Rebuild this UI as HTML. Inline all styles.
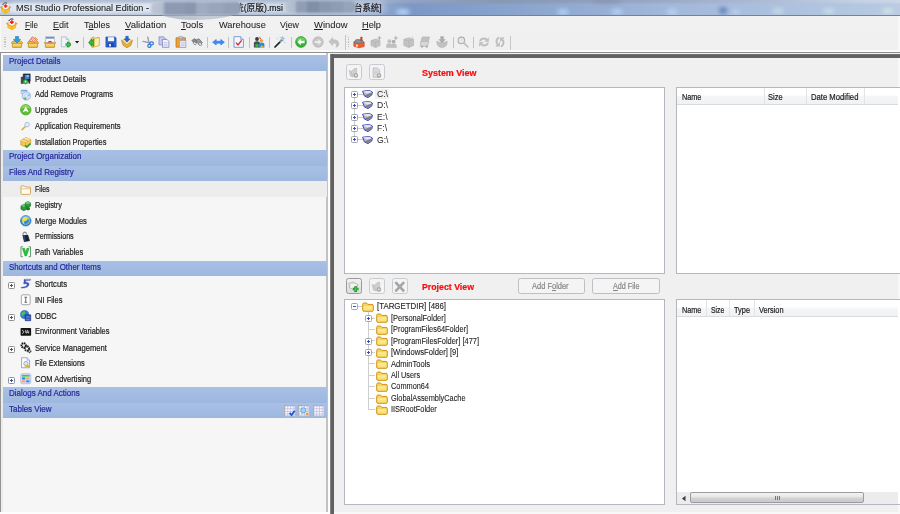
<!DOCTYPE html>
<html><head><meta charset="utf-8"><title>MSI Studio Professional Edition</title>
<style>
*{box-sizing:border-box}
html,body{margin:0;padding:0}
body{width:900px;height:514px;overflow:hidden;position:relative;background:#f0f0f0;
 font-family:"Liberation Sans","Noto Sans CJK SC",sans-serif;font-size:9.7px;color:#1a1a1a}
.a{position:absolute}
.t{position:absolute;white-space:nowrap;transform-origin:0 50%;line-height:12px;height:12px;-webkit-text-stroke:.22px currentColor}
svg{position:absolute;overflow:visible}
#title{left:0;top:0;width:900px;height:15px;
 background:linear-gradient(to right,#d6e1ef 0px,#d0dcec 140px,#c2d0e3 250px,#b4c5df 340px,#8aa3cc 390px,#7d98c5 412px,#87a2cb 500px,#97aed3 600px,#a3b8da 670px,#adc1de 780px,#b5c8e1 870px,#bccbe2 900px)}
#title .top{left:0;top:0;width:900px;height:5px;background:linear-gradient(to right,#a4b4cc 0,#a2b2cb 380px,#93a5c4 405px,#8797b0 500px,#8f9fb9 590px,#9aaac6 670px,#b0bed6 780px,#c8d4e6 870px,#ccd7e8 900px);-webkit-mask-image:linear-gradient(to bottom,#000 0,rgba(0,0,0,.85) 2px,rgba(0,0,0,0) 4.6px);mask-image:linear-gradient(to bottom,#000 0,rgba(0,0,0,.85) 2px,rgba(0,0,0,0) 4.6px)}
#title .bot{left:0;top:10.5px;width:400px;height:4.5px;background:linear-gradient(to bottom,rgba(110,130,165,0),rgba(110,130,165,.32));-webkit-mask-image:linear-gradient(to right,#000 330px,rgba(0,0,0,0) 395px);mask-image:linear-gradient(to right,#000 330px,rgba(0,0,0,0) 395px)}
.blob{position:absolute;filter:blur(2px);border-radius:50%}
#titleline{left:0;top:14.5px;width:900px;height:1.3px;background:#77828f}
#menubar{left:0;top:16px;width:900px;height:17px;background:#f1f1f1}
#toolbar{left:0;top:33px;width:900px;height:19px;background:#f0f0f0}
.mi{color:#1c1c1c;-webkit-text-stroke-width:.05px}
u{text-decoration-thickness:.8px;text-underline-offset:1px}
.sep{position:absolute;width:1px;background:#c2c2c2;top:37px;height:11px}
.hdr{position:absolute;left:3.2px;width:323.6px;height:16px;background:linear-gradient(to bottom,#a9c0e6,#9db7de)}
.hdrt{color:#26269c}
.lt{color:#222}
.box{position:absolute;background:#fff;border:1.2px solid #b4b8be}
.sb{position:absolute;width:16px;height:16px;border:1px solid #c6ccd2;border-radius:2.5px;background:#f4f4f4}
.sb.en{border-color:#9a9a9a;background:linear-gradient(to bottom,#f2f2f2,#dcdcdc)}
.btn{position:absolute;height:16.2px;border:1px solid #bcc0c4;border-radius:2.5px;background:#f4f4f4}
.red{color:#fb0c0c;font-weight:bold}
.tt{color:#1d1d1d;-webkit-text-stroke-width:.12px}
.lh{color:#1d1d1d}
.gr{color:#868686}
.pm{position:absolute;width:7px;height:7px;border:1px solid #a3a3a3;border-radius:1.5px;background:#fff}
.pm i{position:absolute;left:1px;top:2px;width:3px;height:1px;background:#3a4fb0}
.pm b{position:absolute;left:2px;top:1px;width:1px;height:3px;background:#3a4fb0}
.dl{position:absolute;background:#cdcdcd}
</style></head>
<body>
<div id="title" class="a" style="overflow:hidden"><div class="a top"></div><div class="a bot"></div><div class="blob" style="left:396.0px;top:8.5px;width:14px;height:6px;background:#b4d2f6"></div><div class="blob" style="left:557.0px;top:8.5px;width:12px;height:6px;background:#b2cff4"></div><div class="blob" style="left:611.0px;top:8.5px;width:12px;height:6px;background:#b2cff4"></div><div class="blob" style="left:666.0px;top:8.5px;width:12px;height:6px;background:#b8d2f4"></div><div class="blob" style="left:719.0px;top:6.5px;width:8px;height:7px;background:#6485bd"></div><div class="blob" style="left:732.0px;top:10.0px;width:8px;height:4px;background:#c0d6f2"></div><div class="blob" style="left:772.0px;top:8.0px;width:12px;height:6px;background:#c4dbe4"></div><div class="blob" style="left:823.0px;top:8.0px;width:12px;height:6px;background:#c8dde6"></div><div class="blob" style="left:882.0px;top:8.0px;width:12px;height:6px;background:#cfe0e6"></div><div class="blob" style="left:592.0px;top:0.0px;width:30px;height:3px;background:#7f8fa8"></div></div>
<div class="a" style="left:10px;top:1px;width:375px;height:13px;background:rgba(255,255,255,.30);filter:blur(3px);border-radius:6px"></div>
<svg style="left:0.4px;top:1.8px;filter:blur(.3px)" width="11.2" height="11.2" viewBox="0 0 12 12"><path d="M.4 5.600 L2.800 4.400 L6 7.600 L9.200 4.400 L11.600 5.600 L10 7.400 L10 10 L6 12 L2 10 L2 7.400Z" fill="#f6a414" stroke="#d9820c" stroke-width=".5"/><path d="M2 7.400 L6 9.400 L10 7.400 L10 10 L6 12 L2 10Z" fill="#fbc72a"/><path d="M6 9.400 V12" stroke="#e8940f" stroke-width=".5"/><circle cx="6" cy="4.300" r="3.400" fill="#fbf7f7" stroke="#d8cfd2" stroke-width=".4"/><path d="M2.900 3.200 A3.400 3.400 0 0 1 7.600 1.300" fill="none" stroke="#1c2338" stroke-width="1"/><path d="M6 2.300v4M4 4.300h4" stroke="#ee2222" stroke-width="1.700"/></svg>
<span class="t ti" style="left:15.5px;top:1.6px;font-size:9.7px;transform:scaleX(0.939);color:#1b1b1b;-webkit-text-stroke-width:.08px">MSI Studio Professional Edition -</span>
<span class="t ti" style="left:235.4px;top:1.8px;font-size:9.3px;transform:scaleX(0.937);color:#1b1b1b">统(原版).msi</span>
<div class="a" style="left:151px;top:1.5px;width:89.5px;height:13.5px;border-radius:5px;filter:blur(1.1px);background:linear-gradient(to right,#bcc6d4 0,#b4bfce 12px,#8d9ab2 14px,#8d9ab2 33px,#8996ae 35px,#8996ae 44px,#9eabc2 46px,#9eabc2 56px,#98a5bb 58px,#98a5bb 72px,#93a0b7 74px,#93a0b7 100%)"></div>
<span class="t ti" style="left:354.4px;top:1.8px;font-size:9.3px;transform:scaleX(0.905);color:#1b1b1b">台系统]</span>
<div class="a" style="left:285px;top:1.2px;width:71px;height:11.6px;border-radius:5px;filter:blur(1.1px);background:linear-gradient(to right,#b8c3d2 0,#b0bccc 10px,#909db3 12px,#909db3 21px,#828ea7 23px,#828ea7 33px,#8b97ae 35px,#8b97ae 45px,#909cb3 47px,#909cb3 57px,#97a3b8 59px,#97a3b8 100%)"></div>
<div id="titleline" class="a"></div>
<div id="menubar" class="a"></div>
<svg style="left:5.8px;top:18px;filter:blur(.3px)" width="11.6" height="11.6" viewBox="0 0 12 12"><path d="M.4 5.600 L2.800 4.400 L6 7.600 L9.200 4.400 L11.600 5.600 L10 7.400 L10 10 L6 12 L2 10 L2 7.400Z" fill="#f6a414" stroke="#d9820c" stroke-width=".5"/><path d="M2 7.400 L6 9.400 L10 7.400 L10 10 L6 12 L2 10Z" fill="#fbc72a"/><path d="M6 9.400 V12" stroke="#e8940f" stroke-width=".5"/><circle cx="6" cy="4.300" r="3.400" fill="#fbf7f7" stroke="#d8cfd2" stroke-width=".4"/><path d="M2.900 3.200 A3.400 3.400 0 0 1 7.600 1.300" fill="none" stroke="#1c2338" stroke-width="1"/><path d="M6 2.300v4M4 4.300h4" stroke="#ee2222" stroke-width="1.700"/></svg>
<div class="a" style="left:158px;top:11px;width:80px;height:9px;border-radius:0 0 55% 45%/0 0 100% 100%;background:linear-gradient(to right,#b4bdcb,#bcc4d0 40%,#c6ccd6 60%,#bfc6d2);filter:blur(.7px);clip-path:inset(4.4px -3px -3px -3px)"></div>
<span class="t mi" style="left:25.2px;top:18.8px;font-size:9.8px;transform:scaleX(0.823);"><u>F</u>ile</span>
<span class="t mi" style="left:53.3px;top:18.8px;font-size:9.8px;transform:scaleX(0.923);"><u>E</u>dit</span>
<span class="t mi" style="left:84px;top:18.8px;font-size:9.8px;transform:scaleX(0.917);">T<u>a</u>bles</span>
<span class="t mi" style="left:124.9px;top:18.8px;font-size:9.8px;transform:scaleX(0.976);"><u>V</u>alidation</span>
<span class="t mi" style="left:181.2px;top:18.8px;font-size:9.8px;transform:scaleX(0.970);"><u>T</u>ools</span>
<span class="t mi" style="left:218.6px;top:18.8px;font-size:9.8px;transform:scaleX(0.941);">Warehouse</span>
<span class="t mi" style="left:280.3px;top:18.8px;font-size:9.8px;transform:scaleX(0.901);">V<u>i</u>ew</span>
<span class="t mi" style="left:314px;top:18.8px;font-size:9.8px;transform:scaleX(0.961);"><u>W</u>indow</span>
<span class="t mi" style="left:362.3px;top:18.8px;font-size:9.8px;transform:scaleX(0.943);"><u>H</u>elp</span>
<div id="toolbar" class="a"></div>
<div class="a" style="left:0;top:50.4px;width:900px;height:1.4px;background:#fafafa"></div><div class="a" style="left:0;top:16px;width:1px;height:35.8px;background:#fafafa"></div>
<div class="a" style="left:4.4px;top:36.6px;width:1.2px;height:1.2px;background:#c4c4c4"></div>
<div class="a" style="left:4.4px;top:39.0px;width:1.2px;height:1.2px;background:#c4c4c4"></div>
<div class="a" style="left:4.4px;top:41.4px;width:1.2px;height:1.2px;background:#c4c4c4"></div>
<div class="a" style="left:4.4px;top:43.8px;width:1.2px;height:1.2px;background:#c4c4c4"></div>
<div class="a" style="left:4.4px;top:46.2px;width:1.2px;height:1.2px;background:#c4c4c4"></div>
<div class="a" style="left:347.6px;top:36.6px;width:1.2px;height:1.2px;background:#bcbcbc"></div>
<div class="a" style="left:347.6px;top:39.0px;width:1.2px;height:1.2px;background:#bcbcbc"></div>
<div class="a" style="left:347.6px;top:41.4px;width:1.2px;height:1.2px;background:#bcbcbc"></div>
<div class="a" style="left:347.6px;top:43.8px;width:1.2px;height:1.2px;background:#bcbcbc"></div>
<div class="a" style="left:347.6px;top:46.2px;width:1.2px;height:1.2px;background:#bcbcbc"></div>
<div class="a" style="left:344.6px;top:34.6px;width:1px;height:15.4px;background:#c4c4c4"></div>
<div class="a" style="left:510.2px;top:36px;width:1px;height:13.6px;background:#c6c6c6"></div>
<div class="sep" style="left:83px"></div>
<div class="sep" style="left:137px"></div>
<div class="sep" style="left:207px"></div>
<div class="sep" style="left:228px"></div>
<div class="sep" style="left:249px"></div>
<div class="sep" style="left:269px"></div>
<div class="sep" style="left:290.5px"></div>
<div class="sep" style="left:452.5px"></div>
<div class="sep" style="left:473px"></div>
<svg style="left:10.6px;top:36.2px;filter:blur(.3px)" width="12" height="12" viewBox="0 0 12 12"><path d="M.6 6.3 L2.2 5 H9.8 L11.4 6.3 V7.4 H10.6 V11 Q10.6 11.5 10.1 11.5 H1.9 Q1.4 11.5 1.4 11 V7.4 H.6Z" fill="#edc24a" stroke="#b8891f" stroke-width=".7"/><path d="M1.4 7.4 H10.6" stroke="#b8891f" stroke-width=".6"/><path d="M2 8.2 H10 V9.4 H2Z" fill="#f7dc7e"/><path d="M4.4 .5 H7.6 V3.4 H9.6 L6 7 L2.4 3.4 H4.4Z" fill="#2c9be0" stroke="#1a6fb4" stroke-width=".5"/></svg>
<svg style="left:27.2px;top:36.2px;filter:blur(.3px)" width="12" height="12" viewBox="0 0 12 12"><path d="M.6 6.3 L2.2 5 H9.8 L11.4 6.3 V7.4 H10.6 V11 Q10.6 11.5 10.1 11.5 H1.9 Q1.4 11.5 1.4 11 V7.4 H.6Z" fill="#edc24a" stroke="#b8891f" stroke-width=".7"/><path d="M1.4 7.4 H10.6" stroke="#b8891f" stroke-width=".6"/><path d="M2 8.2 H10 V9.4 H2Z" fill="#f7dc7e"/><path d="M2.2 5.2 L5.2 .8 L9.6 3.8 L8.2 6.4Z" fill="#f6ece4" stroke="#d0452a" stroke-width=".6"/><path d="M3.4 4.4 L5.8 1.6 M4.8 5.2 L7.2 2.4 M6.3 5.8 L8.6 3.3" stroke="#e0402a" stroke-width=".7"/><path d="M7.6 1.2 L10.6 4" stroke="#e8a91c" stroke-width="1.1"/></svg>
<svg style="left:43.5px;top:36.2px;filter:blur(.3px)" width="12" height="12" viewBox="0 0 12 12"><path d="M.6 6.3 L2.2 5 H9.8 L11.4 6.3 V7.4 H10.6 V11 Q10.6 11.5 10.1 11.5 H1.9 Q1.4 11.5 1.4 11 V7.4 H.6Z" fill="#edc24a" stroke="#b8891f" stroke-width=".7"/><path d="M1.4 7.4 H10.6" stroke="#b8891f" stroke-width=".6"/><path d="M2 8.2 H10 V9.4 H2Z" fill="#f7dc7e"/><path d="M1.6 .7 H10.4 V6.6 H1.6Z" fill="#fbfbfb" stroke="#9aa0aa" stroke-width=".6"/><path d="M2 1.1 H10 V2.6 H2Z" fill="#4e86d8"/><path d="M3 6.4 Q6 3.2 9 6.4Z" fill="#e23a2a"/></svg>
<svg style="left:60px;top:36.2px;filter:blur(.3px)" width="12" height="12" viewBox="0 0 12 12"><path d="M1.4 .9 H6.2 L8.8 3.5 V10.8 H1.4Z" fill="#eef2f9" stroke="#9fb0cc" stroke-width=".7"/><path d="M6.2 .9 V3.5 H8.8" fill="#d5dfee" stroke="#9fb0cc" stroke-width=".6"/><path d="M8.300 5.800v5.400M5.600 8.500h5.400" stroke="#1f8a28" stroke-width="2.500"/><path d="M8.300 6.400v4.200M6.200 8.500h4.200" stroke="#3cc848" stroke-width="1.300"/></svg>
<svg style="left:87.8px;top:36.2px;filter:blur(.3px)" width="12" height="12" viewBox="0 0 12 12"><path d="M3 2.4 L5.6 1 L6.8 2.2 L11.2 1.4 V9.6 L4 11.4 Z" fill="#efcf5a" stroke="#b99326" stroke-width=".7"/><path d="M6.6 3 L10.8 2.2 V9.2 L6.6 10.4Z" fill="#fbeeb0"/><path d="M.6 6.600 L3.600 3 V5 L5.800 3 V10.200 L3.600 8.200 V10.200Z" fill="#3cb53c" stroke="#1c7d22" stroke-width=".6"/></svg>
<svg style="left:104.6px;top:36.2px;filter:blur(.3px)" width="12" height="12" viewBox="0 0 12 12"><path d="M.9 1 H10.2 L11.1 1.9 V11.1 H.9Z" fill="#2862cf" stroke="#1c48a6" stroke-width=".6"/><path d="M2.9 1.2 H9.1 V5.2 H2.9Z" fill="#f2f5fb"/><path d="M3.3 7.4 H8.7 V11 H3.3Z" fill="#1b46ae"/><path d="M4.1 8 H5.9 V10.6 H4.1Z" fill="#e9eefa"/></svg>
<svg style="left:120.8px;top:36.2px;filter:blur(.3px)" width="12" height="12" viewBox="0 0 12 12"><path d="M.6 4.2 L6 9.2 L11.4 4.2 L9.8 9.4 L6 11.7 L2.2 9.4Z" fill="#f2b52a" stroke="#b97a12" stroke-width=".7"/><path d="M1.6 4 L6 1.8 L10.4 4 L6 8.6Z" fill="#fbe7a4" stroke="#c99a2c" stroke-width=".5"/><path d="M4.7 .3 H7.3 V3 H8.9 L6 6.2 L3.1 3 H4.7Z" fill="#2166e0" stroke="#1546a8" stroke-width=".4"/></svg>
<svg style="left:141.8px;top:36.2px;filter:blur(.3px)" width="12" height="12" viewBox="0 0 12 12"><path d="M7.4 6.8 L1 5.4 M7 7 L5.8 1.2" stroke="#9aa0a8" stroke-width="1.4" stroke-linecap="round"/><ellipse cx="9.6" cy="7.4" rx="1.8" ry="1.5" fill="none" stroke="#2f74d4" stroke-width="1.2"/><ellipse cx="7.4" cy="9.8" rx="1.6" ry="1.6" fill="none" stroke="#2f74d4" stroke-width="1.2"/></svg>
<svg style="left:157.6px;top:36.2px;filter:blur(.3px)" width="12" height="12" viewBox="0 0 12 12"><path d="M1 .8 H5.6 L7.4 2.6 V8.8 H1Z" fill="#c9ccee" stroke="#7a7cb8" stroke-width=".7"/><path d="M4.4 3.4 H9 L10.9 5.3 V11.3 H4.4Z" fill="#f2f3fb" stroke="#6f72b4" stroke-width=".7"/><path d="M5.6 6.6 H9.6 M5.6 8.2 H9.6 M5.6 9.7 H9.6" stroke="#a9abd6" stroke-width=".6"/></svg>
<svg style="left:175px;top:36.2px;filter:blur(.3px)" width="12" height="12" viewBox="0 0 12 12"><path d="M1 1.8 H10.4 V11.2 H1Z" fill="#efa234" stroke="#b86c14" stroke-width=".7"/><path d="M3.8 .6 H7.6 V2.8 H3.8Z" fill="#c9ccd2" stroke="#7e838c" stroke-width=".5"/><path d="M4.6 4.6 H10.9 V11.4 H4.6Z" fill="#eceef6" stroke="#8d90b8" stroke-width=".6"/><path d="M5.8 6.6 H9.8 M5.8 8.2 H9.8 M5.8 9.7 H9.8" stroke="#b3b6d4" stroke-width=".6"/></svg>
<svg style="left:191px;top:36.2px;filter:blur(.3px)" width="12" height="12" viewBox="0 0 12 12"><path d="M.8 4.4 L3.8 2.6 L6.4 5.4 L4 8.2Z" fill="#8a8e94" stroke="#5a5e64" stroke-width=".6"/><path d="M4.8 4 L8 2.8 L11.4 6.6 L8.4 9.2Z" fill="#9a9ea4" stroke="#5a5e64" stroke-width=".6"/><ellipse cx="3.8" cy="7.2" rx="1.7" ry="1.2" fill="#dfe7f1" stroke="#555" stroke-width=".5" transform="rotate(35 3.8 7.2)"/><ellipse cx="9.2" cy="8" rx="1.8" ry="1.3" fill="#dfe7f1" stroke="#555" stroke-width=".5" transform="rotate(35 9.2 8)"/></svg>
<svg style="left:211.6px;top:36.2px;filter:blur(.3px)" width="12" height="12" viewBox="0 0 12 12"><path d="M.6 6.2 L4.2 3.4 V5.2 H8.8 V3.4 L12.400 6.2 L8.8 9 V7.2 H4.2 V9Z" fill="#3a8cf8" stroke="#1c64d4" stroke-width=".5"/></svg>
<svg style="left:233px;top:36.2px;filter:blur(.3px)" width="12" height="12" viewBox="0 0 12 12"><path d="M1 .7 H7.6 L10.4 3.5 V11.3 H1Z" fill="#f4f8fe" stroke="#5c86d0" stroke-width=".8"/><path d="M7.6 .7 V3.5 H10.4" fill="#cfe0f6" stroke="#5c86d0" stroke-width=".6"/><path d="M3 6.6 L5 9 L8.6 4.4" fill="none" stroke="#e2271d" stroke-width="1.4"/></svg>
<svg style="left:253.2px;top:36.2px;filter:blur(.3px)" width="12" height="12" viewBox="0 0 12 12"><circle cx="4" cy="3" r="1.9" fill="#3a3a40"/><path d="M.9 11.4 V7.2 Q.9 5.2 4 5.2 Q7 5.2 7 7.2 V11.4Z" fill="#4a4d55"/><path d="M6.4 .6 L8.2 2.6 L6.6 3.2Z" fill="#e23a2a"/><circle cx="8.4" cy="4.6" r="1.7" fill="#f0a21e"/><path d="M5.6 11.4 V8.4 Q5.6 6.6 8.4 6.6 Q11.4 6.6 11.4 8.6 V11.4Z" fill="#2e86de"/><path d="M2.4 8 H5.2 V11.4 H2.4Z" fill="#3cae3c"/><path d="M8.2 9 L11.6 11.6 H7.4Z" fill="#e9b91f"/></svg>
<svg style="left:274.2px;top:36.2px;filter:blur(.3px)" width="12" height="12" viewBox="0 0 12 12"><path d="M1 11 L7.6 4.4" stroke="#1d1d1d" stroke-width="1.7" stroke-linecap="round"/><path d="M5.8 6.2 L7.6 4.4" stroke="#9aa" stroke-width="1.7"/><path d="M8.6 .4 L9.2 2 L10.8 2.4 L9.4 3.2 L9.4 4.8 L8.2 3.8 L6.6 4.2 L7.4 2.8 L6.6 1.4 L8 1.8Z" fill="#a9d3f2" stroke="#6a9ccc" stroke-width=".4"/><circle cx="3.4" cy="2.6" r=".9" fill="#b8dcf6"/><circle cx="10.6" cy="6.4" r=".9" fill="#b8dcf6"/><circle cx="5.2" cy=".9" r=".6" fill="#cfe6f8"/></svg>
<svg style="left:295.1px;top:36.2px;filter:blur(.3px)" width="12" height="12" viewBox="0 0 12 12"><circle cx="6" cy="6" r="5.4" fill="#2fb52f" stroke="#1c8a20" stroke-width=".6"/><path d="M6 1.2 A4.8 4.8 0 0 1 10.7 5.2 Q6 3.6 1.3 5.2 A4.8 4.8 0 0 1 6 1.2Z" fill="#7ade6c" opacity=".7"/><path d="M2.2 6 L5.8 2.8 V4.8 H9.6 V7.2 H5.8 V9.2Z" fill="#fff"/></svg>
<svg style="left:311.6px;top:36.2px;filter:blur(.3px)" width="12" height="12" viewBox="0 0 12 12"><circle cx="6" cy="6" r="5.2" fill="#c6c6c6" stroke="#adadad" stroke-width=".6"/><path d="M9.6 6 L6.2 3 V4.9 H2.8 V7.1 H6.2 V9Z" fill="#ececec"/></svg>
<svg style="left:328px;top:36.2px;filter:blur(.3px)" width="12" height="12" viewBox="0 0 12 12"><path d="M1 5.6 L4.6 1.6 V3.8 Q10.8 3.4 10.8 8 Q10.8 10.6 8 11.2 Q9 9.6 8.4 8.2 Q7.6 6.8 4.6 7.2 V9.6Z" fill="#c4c4c4" stroke="#b0b0b0" stroke-width=".5"/></svg>
<svg style="left:353px;top:36.2px;filter:blur(.3px)" width="12" height="12" viewBox="0 0 12 12"><path d="M.8 6.2 L3 4.4 H8.6 L11.2 6.4 V10.6 L6 11.8 L.8 10.2Z" fill="#f0602e" stroke="#c23e14" stroke-width=".6"/><path d="M.8 6.2 L3 3.6 H8.6 L11.2 6.4 L6 7.6Z" fill="#8a8f98" stroke="#5d626b" stroke-width=".5"/><path d="M7.6 1 H9.2 V4.6 H7.6Z" fill="#e5482a" stroke="#a83214" stroke-width=".4"/><path d="M3 8.6 H4.8 V10.8 H3Z" fill="#fbe0c8"/></svg>
<svg style="left:369.8px;top:36.2px;filter:blur(.3px)" width="12" height="12" viewBox="0 0 12 12"><path d="M1 4.6 L5.6 3 L10 4.6 V9.6 L5.6 11.6 L1 9.6Z" fill="#c2c2c2" stroke="#aeaeae" stroke-width=".6"/><path d="M1 4.6 L5.6 6.4 L10 4.6 M5.6 6.4 V11.4" stroke="#aeaeae" stroke-width=".5" fill="none"/><path d="M9.4 .2 V3.8 M7.6 2 H11.2" stroke="#aeaeae" stroke-width="1.2"/></svg>
<svg style="left:385.8px;top:36.2px;filter:blur(.3px)" width="12" height="12" viewBox="0 0 12 12"><circle cx="3.4" cy="5.2" r="1.9" fill="#c2c2c2"/><circle cx="7.6" cy="5.6" r="1.9" fill="#aeaeae"/><path d="M.6 11.4 V9 Q.6 7.4 3.4 7.4 Q5.4 7.4 5.6 8.6 Q6 7.8 7.8 7.8 Q10.4 7.8 10.4 9.6 V11.4Z" fill="#c2c2c2" stroke="#aeaeae" stroke-width=".4"/><path d="M9.8 .2 V3.8 M8 2 H11.6" stroke="#aeaeae" stroke-width="1.2"/></svg>
<svg style="left:403.2px;top:36.2px;filter:blur(.3px)" width="12" height="12" viewBox="0 0 12 12"><path d="M.8 3.4 L5.8 1.8 L10.6 3.4 V9.4 L5.8 11.6 L.8 9.4Z" fill="#c2c2c2" stroke="#aeaeae" stroke-width=".6"/><path d="M.8 3.4 L5.8 5.4 L10.6 3.4 M5.8 5.4 V11.4" stroke="#aeaeae" stroke-width=".5" fill="none"/><path d="M9.4 .4 V3 M8.1 1.7 H10.7" stroke="#d8d8d8" stroke-width="1"/></svg>
<svg style="left:419.4px;top:36.2px;filter:blur(.3px)" width="12" height="12" viewBox="0 0 12 12"><path d="M3.2 1 H10.6 L9 6.8 H1.6Z" fill="#c2c2c2" stroke="#aeaeae" stroke-width=".6"/><path d="M2.4 5.4 H9.8 L8.6 10.2 H1Z" fill="#d8d8d8" stroke="#aeaeae" stroke-width=".6"/><circle cx="3" cy="10.6" r="1.2" fill="#aeaeae"/><circle cx="7.8" cy="10.6" r="1.2" fill="#aeaeae"/></svg>
<svg style="left:435.8px;top:36.2px;filter:blur(.3px)" width="12" height="12" viewBox="0 0 12 12"><path d="M.8 5.2 Q.8 11.4 6 11.4 Q11.2 11.4 11.2 5.2 L8.4 6.6 H3.6Z" fill="#c2c2c2" stroke="#aeaeae" stroke-width=".6"/><path d="M4.6 .6 H7.6 V3.6 H9.4 L6.1 7 L2.8 3.6 H4.6Z" fill="#aeaeae" stroke="#a2a2a2" stroke-width=".4"/></svg>
<svg style="left:457px;top:36.2px;filter:blur(.3px)" width="12" height="12" viewBox="0 0 12 12"><circle cx="4.4" cy="4.4" r="3.3" fill="#e6e6e6" stroke="#aeaeae" stroke-width="1.1"/><path d="M6.8 6.8 L10.8 10.8" stroke="#c2c2c2" stroke-width="1.9" stroke-linecap="round"/></svg>
<svg style="left:477.6px;top:36.2px;filter:blur(.3px)" width="12" height="12" viewBox="0 0 12 12"><path d="M1.4 5 Q2.2 1.8 6 1.8 Q8 1.8 9.2 3.2 L10.6 1.8 V5.6 H6.8 L8.2 4.2 Q7.2 3.2 6 3.2 Q3.4 3.2 2.8 5Z" fill="#c2c2c2" stroke="#aeaeae" stroke-width=".4"/><path d="M10.6 7 Q9.8 10.2 6 10.2 Q4 10.2 2.8 8.8 L1.4 10.2 V6.4 H5.2 L3.8 7.8 Q4.8 8.8 6 8.8 Q8.6 8.8 9.2 7Z" fill="#c2c2c2" stroke="#aeaeae" stroke-width=".4"/></svg>
<svg style="left:494.2px;top:36.2px;filter:blur(.3px)" width="12" height="12" viewBox="0 0 12 12"><path d="M5 1 Q1.8 1.8 1.8 5.6 Q1.8 7.6 3.2 8.8 L1.8 10.2 H5.6 V6.4 L4.2 7.8 Q3.2 6.8 3.2 5.6 Q3.2 3 5 2.4Z" fill="#c2c2c2" stroke="#aeaeae" stroke-width=".4"/><path d="M7 11 Q10.2 10.2 10.2 6.4 Q10.2 4.4 8.8 3.2 L10.2 1.8 H6.4 V5.6 L7.8 4.2 Q8.8 5.2 8.8 6.4 Q8.800 9 7 9.600Z" fill="#c2c2c2" stroke="#aeaeae" stroke-width=".4"/></svg>
<svg style="left:75.4px;top:41.2px" width="4.200" height="2.500" viewBox="0 0 5 3"><path d="M0 0H5L2.5 3Z" fill="#1a1a1a"/></svg>
<div class="a" style="left:0px;top:51.8px;width:900px;height:1.3px;background:#8f8f8f"></div>
<div class="a" style="left:0px;top:51.8px;width:1.4px;height:462px;background:#959595"></div>
<div class="a" style="left:1.4px;top:53.1px;width:326px;height:459px;background:linear-gradient(to bottom,#fff,#ececec 30px)"></div>
<div class="a" style="left:3.2px;top:55px;width:323.6px;height:456.5px;background:#f6f6f6"></div>
<div class="a" style="left:326.4px;top:53px;width:1.7px;height:461px;background:#c2c2c2"></div>
<div class="a" style="left:328px;top:53px;width:2.4px;height:461px;background:#fdfdfd"></div>
<div class="a" style="left:3px;top:181px;width:324px;height:16px;background:#ededed"></div>
<div class="hdr" style="top:55.2px;height:15.8px"></div>
<span class="t hdrt" style="left:8.8px;top:55.3px;font-size:9.7px;transform:scaleX(0.824);">Project Details</span>
<div class="hdr" style="top:149.8px;height:15.9px"></div>
<span class="t hdrt" style="left:8.8px;top:149.9px;font-size:9.7px;transform:scaleX(0.826);">Project Organization</span>
<div class="hdr" style="top:165.7px;height:15.3px"></div>
<span class="t hdrt" style="left:8.8px;top:165.8px;font-size:9.7px;transform:scaleX(0.829);">Files And Registry</span>
<div class="hdr" style="top:260.7px;height:15.3px"></div>
<span class="t hdrt" style="left:8.8px;top:260.8px;font-size:9.7px;transform:scaleX(0.812);">Shortcuts and Other Items</span>
<div class="hdr" style="top:387px;height:15.9px"></div>
<span class="t hdrt" style="left:8.8px;top:387.1px;font-size:9.7px;transform:scaleX(0.825);">Dialogs And Actions</span>
<div class="hdr" style="top:402.9px;height:15.1px"></div>
<span class="t hdrt" style="left:8.8px;top:403.0px;font-size:9.7px;transform:scaleX(0.825);">Tables View</span>
<span class="t lt" style="left:34.6px;top:72.5px;font-size:9.7px;transform:scaleX(0.778);">Product Details</span>
<svg style="left:19.8px;top:72.9px;filter:blur(.3px)" width="11.5" height="11.5" viewBox="0 0 12 12"><path d="M3.4 1 H10.6 V8.6 H3.4Z" fill="#2a2c33" stroke="#15161a" stroke-width=".6"/><path d="M5 2 H9.6 V6.2 H5Z" fill="#3f86e6"/><path d="M6.8 2 H9.6 V4 H6.8Z" fill="#7bc0f8"/><path d="M1.2 4.2 H3.4 V11 H1.2Z" fill="#4a4d55" stroke="#222" stroke-width=".5"/><circle cx="5.8" cy="9" r="2.5" fill="#3bb54a" stroke="#187a28" stroke-width=".5"/><circle cx="5.8" cy="9" r=".8" fill="#e9f7ea"/><path d="M8.8 8.6 H10.6 V11 H8.8Z" fill="#2a2c33"/></svg>
<span class="t lt" style="left:34.6px;top:88.4px;font-size:9.7px;transform:scaleX(0.774);">Add Remove Programs</span>
<svg style="left:19.8px;top:88.80000000000001px;filter:blur(.3px)" width="11.5" height="11.5" viewBox="0 0 12 12"><path d="M1.2 1.2 H7.4 V5 H1.2Z" fill="#dfe9f6" stroke="#8ea6c8" stroke-width=".6"/><path d="M1.2 1.2 H7.4 V2.4 H1.2Z" fill="#6d9fe0"/><circle cx="6.6" cy="7.2" r="4.3" fill="#cfe2f7" stroke="#7da2d4" stroke-width=".6"/><circle cx="6.6" cy="7.200" r="1.4" fill="#fff" stroke="#8fb1dd" stroke-width=".5"/><path d="M3 9.600 A4.3 4.3 0 0 0 6.600 11.5 L6.600 8.600Z" fill="#58b86a"/><path d="M9.6 4.2 A4.3 4.3 0 0 1 10.9 7.200 L8 7.200Z" fill="#8fc4f4"/></svg>
<span class="t lt" style="left:34.6px;top:104.0px;font-size:9.7px;transform:scaleX(0.771);">Upgrades</span>
<svg style="left:19.8px;top:104.4px;filter:blur(.3px)" width="11.5" height="11.5" viewBox="0 0 12 12"><circle cx="6" cy="6" r="5.5" fill="#5cc02c" stroke="#3d9a18" stroke-width=".6"/><path d="M6 1 A5 5 0 0 1 10.8 5 Q6 3 1.2 5 A5 5 0 0 1 6 1Z" fill="#9be26c" opacity=".75"/><path d="M6 2.600 L9.200 8.600 L6 7.400 L2.800 8.600Z" fill="#fff"/></svg>
<span class="t lt" style="left:34.6px;top:119.8px;font-size:9.7px;transform:scaleX(0.775);">Application Requirements</span>
<svg style="left:19.8px;top:120.2px;filter:blur(.3px)" width="11.5" height="11.5" viewBox="0 0 12 12"><path d="M2.2 10 L5.6 6.800" stroke="#dcaa3e" stroke-width="1.600" stroke-linecap="round"/><circle cx="7.400" cy="4.800" r="2.400" fill="#dbeefc" stroke="#a3bcd8" stroke-width=".9"/></svg>
<span class="t lt" style="left:34.6px;top:136.0px;font-size:9.7px;transform:scaleX(0.767);">Installation Properties</span>
<svg style="left:19.8px;top:136.4px;filter:blur(.3px)" width="11.5" height="11.5" viewBox="0 0 12 12"><path d="M.8 4.600 L6.200 1.600 L11.200 3.600 V8.400 L5.800 11.400 L.8 9.400Z" fill="#f1c94c" stroke="#b8912a" stroke-width=".6"/><path d="M.8 4.600 L5.800 6.600 L11.200 3.600 M5.800 6.600 V11.400" stroke="#b8912a" stroke-width=".5" fill="none"/><path d="M.8 4.600 L6.200 1.600 L11.200 3.600 L5.800 6.600Z" fill="#f9e38e"/><path d="M3 3.400 L8.400 5.200" stroke="#e08a8a" stroke-width=".8"/><path d="M5.400 9.600 L7.200 11.600 L10.800 8" fill="none" stroke="#22a43a" stroke-width="1.700"/></svg>
<span class="t lt" style="left:34.6px;top:183.2px;font-size:9.7px;transform:scaleX(0.708);">Files</span>
<svg style="left:19.8px;top:183.6px;filter:blur(.3px)" width="11.5" height="11.5" viewBox="0 0 12 12"><path d="M1 3 Q1 2 2 2 H4.600 L5.600 3.200 H10 Q11 3.200 11 4.200 V9.800 Q11 10.800 10 10.800 H2 Q1 10.800 1 9.800Z" fill="#fffdf6" stroke="#d3a453" stroke-width="1"/><path d="M1.200 5 H11" stroke="#d9b26a" stroke-width=".8"/></svg>
<span class="t lt" style="left:34.6px;top:199.1px;font-size:9.7px;transform:scaleX(0.760);">Registry</span>
<svg style="left:19.8px;top:199.5px;filter:blur(.3px)" width="11.5" height="11.5" viewBox="0 0 12 12"><path d="M1 6 L4 4.600 L7 6 V9.600 L4 11.200 L1 9.600Z" fill="#2f9a3c" stroke="#14601f" stroke-width=".6"/><path d="M1 6 L4 7.400 L7 6 L4 4.600Z" fill="#63cf6c"/><path d="M5.400 3 L8.200 1.600 L11 3 V6.400 L8.200 7.800 L5.400 6.400Z" fill="#2f9a3c" stroke="#14601f" stroke-width=".6"/><path d="M5.400 3 L8.200 4.400 L11 3 L8.200 1.600Z" fill="#6ad874"/><path d="M6.400 8 L8.400 7 L10.400 8 V10 L8.400 11 L6.400 10Z" fill="#1f7a2c"/></svg>
<span class="t lt" style="left:34.6px;top:214.7px;font-size:9.7px;transform:scaleX(0.777);">Merge Modules</span>
<svg style="left:19.8px;top:215.1px;filter:blur(.3px)" width="11.5" height="11.5" viewBox="0 0 12 12"><circle cx="6" cy="6" r="5.500" fill="#2f8be6" stroke="#1a62b8" stroke-width=".6"/><path d="M6 .8 A5.200 5.200 0 0 1 11 4.600 Q6 3 1 4.600 A5.200 5.200 0 0 1 6 .8Z" fill="#8cc8f8" opacity=".7"/><path d="M6 2.200 A1.900 1.900 0 0 1 6 6 A1.900 1.900 0 0 0 6 9.800 A3.800 3.800 0 0 1 6 2.200Z" fill="#f4de3a"/><circle cx="6" cy="4.100" r=".7" fill="#f4de3a"/><circle cx="6" cy="7.900" r=".7" fill="#2f8be6"/><path d="M6 2.200 A3.800 3.800 0 0 1 6 9.800" fill="none" stroke="#f4de3a" stroke-width=".6"/></svg>
<span class="t lt" style="left:34.6px;top:230.4px;font-size:9.7px;transform:scaleX(0.733);">Permissions</span>
<svg style="left:19.8px;top:230.8px;filter:blur(.3px)" width="11.5" height="11.5" viewBox="0 0 12 12"><path d="M3.200 5 Q2.600 1.400 5 1.200 Q6.800 1.200 7 3.400" fill="none" stroke="#8a8e98" stroke-width="1.100"/><path d="M3 4.800 L8.200 4.200 L10 10.200 L4.400 11.200Z" fill="#1c2038" stroke="#0c0e1c" stroke-width=".5"/><path d="M3.600 5.400 L5 5.200 L6 10.400 L4.800 10.600Z" fill="#3b4470"/></svg>
<span class="t lt" style="left:34.6px;top:246.0px;font-size:9.7px;transform:scaleX(0.775);">Path Variables</span>
<svg style="left:19.8px;top:246.4px;filter:blur(.3px)" width="11.5" height="11.5" viewBox="0 0 12 12"><path d="M3 .8 H1 V11.200 H3 M9 .8 H11 V11.200 H9" fill="none" stroke="#4d8a56" stroke-width=".9"/><path d="M2.400 2.400 H4.800 L6 6.800 L7.200 2.400 H9.600 L6.800 10.400 H5.200Z" fill="#25c43a" stroke="#138a24" stroke-width=".4"/></svg>
<span class="t lt" style="left:34.6px;top:278.0px;font-size:9.7px;transform:scaleX(0.782);">Shortcuts</span>
<svg style="left:19.8px;top:278.4px;filter:blur(.3px)" width="11.5" height="11.5" viewBox="0 0 12 12"><path d="M4.400 1.200 H11.200 L10.600 2.600 H6.200 L5.800 4.400 Q9.800 4 9.400 7 Q8.800 10.200 2 10.600 L.8 9.800 Q7 9.400 7.400 7 Q7.400 5.600 3.800 6.200Z" fill="#3f55c8" stroke="#2c3c9c" stroke-width=".3"/><path d="M4.600 1.400 H11 L10.500 2.400 H5.900Z" fill="#8fa4ee"/></svg>
<span class="t lt" style="left:34.6px;top:293.6px;font-size:9.7px;transform:scaleX(0.772);">INI Files</span>
<svg style="left:19.8px;top:294.0px;filter:blur(.3px)" width="11.5" height="11.5" viewBox="0 0 12 12"><rect x="1.400" y=".8" width="9.200" height="10.400" rx="1.600" fill="#fdfdfd" stroke="#8c8c8c" stroke-width=".8"/><path d="M4.600 3.400 H7.400 M6 3.400 V8.600 M4.600 8.600 H7.400" stroke="#444" stroke-width=".8"/></svg>
<span class="t lt" style="left:34.6px;top:309.8px;font-size:9.7px;transform:scaleX(0.772);">ODBC</span>
<svg style="left:19.8px;top:310.2px;filter:blur(.3px)" width="11.5" height="11.5" viewBox="0 0 12 12"><circle cx="4.800" cy="4.800" r="4.200" fill="#2d7fd8" stroke="#1a56a0" stroke-width=".6"/><path d="M1.600 3.200 Q3 .8 5.400 1.600 Q6.200 3.600 4.600 4.400 Q3.200 6.800 1.400 5.400Z" fill="#4cc050"/><path d="M5.400 5 H11.200 V11.200 H5.400Z" fill="#2647ae" stroke="#182f80" stroke-width=".6"/><path d="M6.400 6.600 H10.200 M6.400 8.200 H10.200 M6.400 9.800 H10.200" stroke="#7fa0e8" stroke-width=".7"/></svg>
<span class="t lt" style="left:34.6px;top:325.4px;font-size:9.7px;transform:scaleX(0.770);">Environment Variables</span>
<svg style="left:19.8px;top:325.79999999999995px;filter:blur(.3px)" width="11.5" height="11.5" viewBox="0 0 12 12"><rect x=".6" y="2" width="11" height="8.200" rx=".8" fill="#141414"/><path d="M2.200 4 L4.200 6 L2.200 8" fill="none" stroke="#f0f0f0" stroke-width=".9"/><path d="M5.600 4 L6.800 8 M7.600 4 L9 8 M5.400 5.400 H9.600 M5.400 6.800 H9.600" stroke="#e8e8e8" stroke-width=".6"/></svg>
<span class="t lt" style="left:34.6px;top:341.6px;font-size:9.7px;transform:scaleX(0.785);">Service Management</span>
<svg style="left:19.8px;top:342.0px;filter:blur(.3px)" width="11.5" height="11.5" viewBox="0 0 12 12"><circle cx="3.800" cy="3.600" r="2.300" fill="none" stroke="#151515" stroke-width="2" stroke-dasharray="1.400 .6"/><circle cx="7.200" cy="6.800" r="2.300" fill="none" stroke="#1d1d1d" stroke-width="2" stroke-dasharray="1.400 .6"/><circle cx="9.800" cy="9.600" r="1.400" fill="none" stroke="#333" stroke-width="1.400" stroke-dasharray="1 .5"/></svg>
<span class="t lt" style="left:34.6px;top:356.7px;font-size:9.7px;transform:scaleX(0.756);">File Extensions</span>
<svg style="left:19.8px;top:357.09999999999997px;filter:blur(.3px)" width="11.5" height="11.5" viewBox="0 0 12 12"><path d="M1.600 .8 H7.400 L10 3.400 V11.200 H1.600Z" fill="#fbfcfe" stroke="#7f92c8" stroke-width=".8"/><path d="M7.400 .8 V3.400 H10" fill="#cfdcf2" stroke="#7f92c8" stroke-width=".5"/><circle cx="6.200" cy="6.800" r="2.200" fill="#e4e8ee" stroke="#9aa2ae" stroke-width=".9"/><path d="M5 9.800 H9.400" stroke="#e8c020" stroke-width="1.700"/><path d="M7.800 8.400 L9.400 10" stroke="#8a8a8a" stroke-width="1"/></svg>
<span class="t lt" style="left:34.6px;top:372.8px;font-size:9.7px;transform:scaleX(0.773);">COM Advertising</span>
<svg style="left:19.8px;top:373.2px;filter:blur(.3px)" width="11.5" height="11.5" viewBox="0 0 12 12"><rect x=".8" y=".8" width="10.400" height="10.400" rx="1.600" fill="#dfe6fa" stroke="#aab4e6" stroke-width=".9"/><path d="M2 2 H10 V3.800 H2Z" fill="#4cc04a"/><path d="M2 4.600 H5.600 V6.800 H2Z" fill="#2f7fe6"/><path d="M6.400 4.600 H10 V6.800 H6.400Z" fill="#f7a46a"/><path d="M2 7.600 H5.600 V9.800 H2Z" fill="#f7a05a"/><path d="M6.400 7.600 H10 V9.800 H6.400Z" fill="#2f8fee"/></svg>
<div class="pm" style="left:8px;top:282px;border-color:#8e8e8e"><i></i><b></b></div>
<div class="pm" style="left:8px;top:314px;border-color:#8e8e8e"><i></i><b></b></div>
<div class="pm" style="left:8px;top:346px;border-color:#8e8e8e"><i></i><b></b></div>
<div class="pm" style="left:8px;top:377px;border-color:#8e8e8e"><i></i><b></b></div>
<svg style="left:284.3px;top:405.3px;filter:blur(.25px)" width="11.3" height="11.3" viewBox="0 0 11.4 11.4"><rect x=".4" y=".4" width="10.600" height="10.600" fill="#fbfbff" stroke="#bfc3cc" stroke-width=".8"/><path d="M.4 .8 H11 M.8 .4 V11" stroke="#9b9fa8" stroke-width=".8"/><path d="M3.800 1 V11 M6.600 1 V11 M9.200 1 V11 M1 3.800 H11 M1 6.600 H11 M1 9.200 H11" stroke="#b9b4e4" stroke-width=".7"/><path d="M5.600 8 L7.600 10.200 L10.800 5.800" fill="none" stroke="#1c56c8" stroke-width="1.700"/></svg>
<svg style="left:298.3px;top:405.3px;filter:blur(.25px)" width="11.3" height="11.3" viewBox="0 0 11.4 11.4"><rect x=".4" y=".4" width="10.600" height="10.600" fill="#fbfbff" stroke="#bfc3cc" stroke-width=".8"/><path d="M.4 .8 H11 M.8 .4 V11" stroke="#9b9fa8" stroke-width=".8"/><path d="M3.800 1 V11 M6.600 1 V11 M9.200 1 V11 M1 3.800 H11 M1 6.600 H11 M1 9.200 H11" stroke="#b9b4e4" stroke-width=".7"/><circle cx="5.400" cy="5.400" r="2.600" fill="#9fd6f6" stroke="#4a9ad8" stroke-width=".8"/><circle cx="9.200" cy="9.200" r="1.300" fill="#f59a23"/></svg>
<svg style="left:312.5px;top:405.3px;filter:blur(.25px)" width="11.3" height="11.3" viewBox="0 0 11.4 11.4"><rect x=".4" y=".4" width="10.600" height="10.600" fill="#fbfbff" stroke="#bfc3cc" stroke-width=".8"/><path d="M.4 .8 H11 M.8 .4 V11" stroke="#9b9fa8" stroke-width=".8"/><path d="M3.800 1 V11 M6.600 1 V11 M9.200 1 V11 M1 3.800 H11 M1 6.600 H11 M1 9.200 H11" stroke="#b9b4e4" stroke-width=".7"/></svg>
<div class="a" style="left:330.3px;top:54.3px;width:570px;height:3.7px;background:linear-gradient(to bottom,#7a7a7a,#5e5e5e 40%,#666)"></div>
<div class="a" style="left:330.3px;top:54.3px;width:3.8px;height:460px;background:linear-gradient(to right,#8c8c8c,#5c5c5c 45%,#636363)"></div>
<div class="a" style="left:897.7px;top:16px;width:2.3px;height:35.8px;background:#f8f8f8"></div>
<div class="a" style="left:897.7px;top:58.2px;width:2.3px;height:28.6px;background:#f8f8f8"></div>
<div class="a" style="left:897.7px;top:274px;width:2.3px;height:25.0px;background:#f8f8f8"></div>
<div class="a" style="left:897.7px;top:505.2px;width:2.3px;height:8.8px;background:#f8f8f8"></div>
<div class="a" style="left:334px;top:511.5px;width:566px;height:2.5px;background:#f8f8f8"></div>
<div class="a" style="left:0;top:511.6px;width:330px;height:2.4px;background:#fdfdfd"></div>
<div class="box" style="left:344.4px;top:86.8px;width:321px;height:187px"></div>
<div class="box" style="left:675.7px;top:86.8px;width:230px;height:187px"></div>
<div class="box" style="left:344.4px;top:299px;width:321px;height:206px"></div>
<div class="box" style="left:675.7px;top:299px;width:230px;height:206px"></div>
<div class="sb" style="left:346px;top:64.3px"></div><div class="sb" style="left:369px;top:64.3px"></div>
<div class="sb en" style="left:346px;top:278.3px"></div><div class="sb" style="left:369px;top:278.3px"></div><div class="sb" style="left:392px;top:278.3px"></div>
<svg style="left:348.3px;top:66.5px;filter:blur(.3px)" width="11.5" height="11.5" viewBox="0 0 12 12"><path d="M1.200 3.600 L3.200 4.600 L7.200 1.400 H9 V8 L4.800 10.200 L2.600 9.600Z" fill="#cfcfcf" stroke="#b4b4b4" stroke-width=".6"/><path d="M3.200 4.600 L4.800 10" stroke="#b4b4b4" stroke-width=".5"/><circle cx="8.200" cy="8.800" r="2.300" fill="#9c9c9c"/><path d="M8.200 7.400v2.800M6.800 8.800h2.800" stroke="#e8e8e8" stroke-width=".9"/></svg>
<svg style="left:371.2px;top:66.5px;filter:blur(.3px)" width="11.5" height="11.5" viewBox="0 0 12 12"><path d="M2.200 1 H6.800 L9 3.200 V10.600 H2.200Z" fill="#dedede" stroke="#b0b0b0" stroke-width=".7"/><path d="M3.400 4 H7.600 M3.400 5.600 H7.600 M3.400 7.200 H6" stroke="#c2c2c2" stroke-width=".6"/><circle cx="8.400" cy="8.800" r="2.300" fill="#9c9c9c"/><path d="M8.400 7.400v2.800M7 8.800h2.800" stroke="#e8e8e8" stroke-width=".9"/></svg>
<svg style="left:348.4px;top:280.6px;filter:blur(.3px)" width="11.5" height="11.5" viewBox="0 0 12 12"><path d="M.8 2.400 L5.400 1.200 L10.200 3.800 L9.600 6 L5 8.600 L1.800 7.400Z" fill="#f4f4f4" stroke="#a8a8a8" stroke-width=".8"/><path d="M1.800 7.400 L2.600 3.400 L6.800 2.200" fill="none" stroke="#c4c4c4" stroke-width=".5"/><path d="M8 5.400v6M5 8.400h6" stroke="#158a22" stroke-width="2.700"/><path d="M8 6v4.800M5.600 8.400h4.800" stroke="#2fd23c" stroke-width="1.400"/></svg>
<svg style="left:371.4px;top:280.6px;filter:blur(.3px)" width="11.5" height="11.5" viewBox="0 0 12 12"><path d="M1.200 3.600 L3.200 4.600 L7.200 1.400 H9 V8 L4.800 10.200 L2.600 9.600Z" fill="#cfcfcf" stroke="#b4b4b4" stroke-width=".6"/><path d="M3.200 4.600 L4.800 10" stroke="#b4b4b4" stroke-width=".5"/><circle cx="8.200" cy="8.800" r="2.300" fill="#9c9c9c"/><path d="M8.200 7.400v2.800M6.800 8.800h2.800" stroke="#e8e8e8" stroke-width=".9"/></svg>
<svg style="left:394.3px;top:280.6px;filter:blur(.3px)" width="11.5" height="11.5" viewBox="0 0 12 12"><path d="M2.200 2 L9.800 10 M9.800 2 L2.200 10" stroke="#a6a6a6" stroke-width="2.900" stroke-linecap="round"/></svg>
<span class="t red" style="left:421.8px;top:67.0px;font-size:9.7px;transform:scaleX(0.923);">System View</span>
<span class="t red" style="left:421.8px;top:281.0px;font-size:9.7px;transform:scaleX(0.905);">Project View</span>
<div class="btn" style="left:517.5px;top:278.3px;width:67px"></div><div class="btn" style="left:592.3px;top:278.3px;width:67.4px"></div>
<span class="t gr" style="left:532px;top:280.2px;font-size:9.7px;transform:scaleX(0.772);">Add F<u>o</u>lder</span>
<span class="t gr" style="left:612.6px;top:280.2px;font-size:9.7px;transform:scaleX(0.743);"><u>A</u>dd File</span>
<div class="a" style="left:375.3px;top:88.9px;width:14px;height:10.3px;background:#f0f0f0"></div>
<div class="dl" style="left:358px;top:93.7px;width:4.5px;height:1px"></div>
<div class="dl" style="left:354px;top:97.7px;width:1px;height:4.5px"></div>
<div class="pm" style="left:351px;top:91px"><i></i><b></b></div>
<svg style="left:362.3px;top:89.9px;filter:blur(.3px)" width="10.8" height="8" viewBox="0 0 10.8 8"><path d="M.6 1.200 L7.400 .5 L10.400 2 L9.800 5 L6 7.600 L2.400 6Z" fill="#b9bcc0" stroke="#2c2fc0" stroke-width=".9"/><path d="M.8 1.400 L7.300 .8 L10 2.200 L5.600 3.800Z" fill="#e4e6e8"/><path d="M2.600 5.600 L5.800 7 L9.600 4.600 L10 2.400 L5.600 4Z" fill="#7e8186"/></svg>
<span class="t tt" style="left:376.7px;top:88.0px;font-size:9.7px;transform:scaleX(0.890);-webkit-text-stroke-width:.05px;color:#2a2a2a">C:\</span>
<div class="dl" style="left:358px;top:105.1px;width:4.5px;height:1px"></div>
<div class="dl" style="left:354px;top:109.1px;width:1px;height:4.5px"></div>
<div class="pm" style="left:351px;top:102px"><i></i><b></b></div>
<svg style="left:362.3px;top:101.32000000000001px;filter:blur(.3px)" width="10.8" height="8" viewBox="0 0 10.8 8"><path d="M.6 1.200 L7.400 .5 L10.400 2 L9.800 5 L6 7.600 L2.400 6Z" fill="#b9bcc0" stroke="#2c2fc0" stroke-width=".9"/><path d="M.8 1.400 L7.300 .8 L10 2.200 L5.600 3.800Z" fill="#e4e6e8"/><path d="M2.600 5.600 L5.800 7 L9.600 4.600 L10 2.400 L5.600 4Z" fill="#7e8186"/></svg>
<span class="t tt" style="left:376.7px;top:99.4px;font-size:9.7px;transform:scaleX(0.890);-webkit-text-stroke-width:.05px;color:#2a2a2a">D:\</span>
<div class="dl" style="left:358px;top:116.5px;width:4.5px;height:1px"></div>
<div class="dl" style="left:354px;top:120.5px;width:1px;height:4.5px"></div>
<div class="pm" style="left:351px;top:114px"><i></i><b></b></div>
<svg style="left:362.3px;top:112.74000000000001px;filter:blur(.3px)" width="10.8" height="8" viewBox="0 0 10.8 8"><path d="M.6 1.200 L7.400 .5 L10.400 2 L9.800 5 L6 7.600 L2.400 6Z" fill="#b9bcc0" stroke="#2c2fc0" stroke-width=".9"/><path d="M.8 1.400 L7.300 .8 L10 2.200 L5.600 3.800Z" fill="#e4e6e8"/><path d="M2.600 5.600 L5.800 7 L9.600 4.600 L10 2.400 L5.600 4Z" fill="#7e8186"/></svg>
<span class="t tt" style="left:376.7px;top:110.8px;font-size:9.7px;transform:scaleX(0.890);-webkit-text-stroke-width:.05px;color:#2a2a2a">E:\</span>
<div class="dl" style="left:358px;top:128.0px;width:4.5px;height:1px"></div>
<div class="dl" style="left:354px;top:132.0px;width:1px;height:4.5px"></div>
<div class="pm" style="left:351px;top:125px"><i></i><b></b></div>
<svg style="left:362.3px;top:124.16000000000001px;filter:blur(.3px)" width="10.8" height="8" viewBox="0 0 10.8 8"><path d="M.6 1.200 L7.400 .5 L10.400 2 L9.800 5 L6 7.600 L2.400 6Z" fill="#b9bcc0" stroke="#2c2fc0" stroke-width=".9"/><path d="M.8 1.400 L7.300 .8 L10 2.200 L5.600 3.800Z" fill="#e4e6e8"/><path d="M2.600 5.600 L5.800 7 L9.600 4.600 L10 2.400 L5.600 4Z" fill="#7e8186"/></svg>
<span class="t tt" style="left:376.7px;top:122.3px;font-size:9.7px;transform:scaleX(0.890);-webkit-text-stroke-width:.05px;color:#2a2a2a">F:\</span>
<div class="dl" style="left:358px;top:139.4px;width:4.5px;height:1px"></div>
<div class="pm" style="left:351px;top:136px"><i></i><b></b></div>
<svg style="left:362.3px;top:135.57999999999998px;filter:blur(.3px)" width="10.8" height="8" viewBox="0 0 10.8 8"><path d="M.6 1.200 L7.400 .5 L10.400 2 L9.800 5 L6 7.600 L2.400 6Z" fill="#b9bcc0" stroke="#2c2fc0" stroke-width=".9"/><path d="M.8 1.400 L7.300 .8 L10 2.200 L5.600 3.800Z" fill="#e4e6e8"/><path d="M2.600 5.600 L5.800 7 L9.600 4.600 L10 2.400 L5.600 4Z" fill="#7e8186"/></svg>
<span class="t tt" style="left:376.7px;top:133.7px;font-size:9.7px;transform:scaleX(0.890);-webkit-text-stroke-width:.05px;color:#2a2a2a">G:\</span>
<div class="dl" style="left:368px;top:311.5px;width:1px;height:98.2px"></div>
<div class="dl" style="left:358px;top:306.0px;width:4px;height:1px"></div>
<div class="pm" style="left:351px;top:303px"><i></i></div>
<svg style="left:361.8px;top:301.9px;filter:blur(.3px)" width="12" height="10" viewBox="0 0 12 10"><path d="M.7 2.400 Q.7 1 2 1 H4.600 L5.800 2.400 H10 Q11.300 2.400 11.300 3.600 V8 Q11.300 9.300 10 9.300 H2 Q.7 9.300 .7 8Z" fill="#f6d45c" stroke="#d2921c" stroke-width="1"/><path d="M1.600 4.400 H10.400 V5.800 H1.600Z" fill="#fdf0a8"/><path d="M1.600 5.800 H10.400 V8.300 H1.600Z" fill="#fbe27a"/></svg>
<span class="t tt" style="left:377.3px;top:300.1px;font-size:9.7px;transform:scaleX(0.813);">[TARGETDIR] [486]</span>
<div class="dl" style="left:368px;top:317.5px;width:7px;height:1px"></div>
<div class="pm" style="left:365px;top:315px"><i></i><b></b></div>
<svg style="left:375.5px;top:313.37px;filter:blur(.3px)" width="12" height="10" viewBox="0 0 12 10"><path d="M.7 2.400 Q.7 1 2 1 H4.600 L5.800 2.400 H10 Q11.300 2.400 11.300 3.600 V8 Q11.300 9.300 10 9.300 H2 Q.7 9.300 .7 8Z" fill="#f6d45c" stroke="#d2921c" stroke-width="1"/><path d="M1.600 4.400 H10.400 V5.800 H1.600Z" fill="#fdf0a8"/><path d="M1.600 5.800 H10.400 V8.300 H1.600Z" fill="#fbe27a"/></svg>
<span class="t tt" style="left:390.7px;top:311.6px;font-size:9.7px;transform:scaleX(0.771);">[PersonalFolder]</span>
<div class="dl" style="left:368px;top:328.9px;width:7px;height:1px"></div>
<svg style="left:375.5px;top:324.84px;filter:blur(.3px)" width="12" height="10" viewBox="0 0 12 10"><path d="M.7 2.400 Q.7 1 2 1 H4.600 L5.800 2.400 H10 Q11.300 2.400 11.300 3.600 V8 Q11.300 9.300 10 9.300 H2 Q.7 9.300 .7 8Z" fill="#f6d45c" stroke="#d2921c" stroke-width="1"/><path d="M1.600 4.400 H10.400 V5.800 H1.600Z" fill="#fdf0a8"/><path d="M1.600 5.800 H10.400 V8.300 H1.600Z" fill="#fbe27a"/></svg>
<span class="t tt" style="left:390.7px;top:323.0px;font-size:9.7px;transform:scaleX(0.761);">[ProgramFiles64Folder]</span>
<div class="dl" style="left:368px;top:340.4px;width:7px;height:1px"></div>
<div class="pm" style="left:365px;top:338px"><i></i><b></b></div>
<svg style="left:375.5px;top:336.31px;filter:blur(.3px)" width="12" height="10" viewBox="0 0 12 10"><path d="M.7 2.400 Q.7 1 2 1 H4.600 L5.800 2.400 H10 Q11.300 2.400 11.300 3.600 V8 Q11.300 9.300 10 9.300 H2 Q.7 9.300 .7 8Z" fill="#f6d45c" stroke="#d2921c" stroke-width="1"/><path d="M1.600 4.400 H10.400 V5.800 H1.600Z" fill="#fdf0a8"/><path d="M1.600 5.800 H10.400 V8.300 H1.600Z" fill="#fbe27a"/></svg>
<span class="t tt" style="left:390.7px;top:334.5px;font-size:9.7px;transform:scaleX(0.767);">[ProgramFilesFolder] [477]</span>
<div class="dl" style="left:368px;top:351.9px;width:7px;height:1px"></div>
<div class="pm" style="left:365px;top:349px"><i></i><b></b></div>
<svg style="left:375.5px;top:347.78px;filter:blur(.3px)" width="12" height="10" viewBox="0 0 12 10"><path d="M.7 2.400 Q.7 1 2 1 H4.600 L5.800 2.400 H10 Q11.300 2.400 11.300 3.600 V8 Q11.300 9.300 10 9.300 H2 Q.7 9.300 .7 8Z" fill="#f6d45c" stroke="#d2921c" stroke-width="1"/><path d="M1.600 4.400 H10.400 V5.800 H1.600Z" fill="#fdf0a8"/><path d="M1.600 5.800 H10.400 V8.300 H1.600Z" fill="#fbe27a"/></svg>
<span class="t tt" style="left:390.7px;top:346.0px;font-size:9.7px;transform:scaleX(0.788);">[WindowsFolder] [9]</span>
<div class="dl" style="left:368px;top:363.4px;width:7px;height:1px"></div>
<svg style="left:375.5px;top:359.25px;filter:blur(.3px)" width="12" height="10" viewBox="0 0 12 10"><path d="M.7 2.400 Q.7 1 2 1 H4.600 L5.800 2.400 H10 Q11.300 2.400 11.300 3.600 V8 Q11.300 9.300 10 9.300 H2 Q.7 9.300 .7 8Z" fill="#f6d45c" stroke="#d2921c" stroke-width="1"/><path d="M1.600 4.400 H10.400 V5.800 H1.600Z" fill="#fdf0a8"/><path d="M1.600 5.800 H10.400 V8.300 H1.600Z" fill="#fbe27a"/></svg>
<span class="t tt" style="left:390.7px;top:357.5px;font-size:9.7px;transform:scaleX(0.781);">AdminTools</span>
<div class="dl" style="left:368px;top:374.8px;width:7px;height:1px"></div>
<svg style="left:375.5px;top:370.71999999999997px;filter:blur(.3px)" width="12" height="10" viewBox="0 0 12 10"><path d="M.7 2.400 Q.7 1 2 1 H4.600 L5.800 2.400 H10 Q11.300 2.400 11.300 3.600 V8 Q11.300 9.300 10 9.300 H2 Q.7 9.300 .7 8Z" fill="#f6d45c" stroke="#d2921c" stroke-width="1"/><path d="M1.600 4.400 H10.400 V5.800 H1.600Z" fill="#fdf0a8"/><path d="M1.600 5.800 H10.400 V8.300 H1.600Z" fill="#fbe27a"/></svg>
<span class="t tt" style="left:390.7px;top:368.9px;font-size:9.7px;transform:scaleX(0.751);">All Users</span>
<div class="dl" style="left:368px;top:386.3px;width:7px;height:1px"></div>
<svg style="left:375.5px;top:382.19px;filter:blur(.3px)" width="12" height="10" viewBox="0 0 12 10"><path d="M.7 2.400 Q.7 1 2 1 H4.600 L5.800 2.400 H10 Q11.300 2.400 11.300 3.600 V8 Q11.300 9.300 10 9.300 H2 Q.7 9.300 .7 8Z" fill="#f6d45c" stroke="#d2921c" stroke-width="1"/><path d="M1.600 4.400 H10.400 V5.800 H1.600Z" fill="#fdf0a8"/><path d="M1.600 5.800 H10.400 V8.300 H1.600Z" fill="#fbe27a"/></svg>
<span class="t tt" style="left:390.7px;top:380.4px;font-size:9.7px;transform:scaleX(0.759);">Common64</span>
<div class="dl" style="left:368px;top:397.8px;width:7px;height:1px"></div>
<svg style="left:375.5px;top:393.65999999999997px;filter:blur(.3px)" width="12" height="10" viewBox="0 0 12 10"><path d="M.7 2.400 Q.7 1 2 1 H4.600 L5.800 2.400 H10 Q11.300 2.400 11.300 3.600 V8 Q11.300 9.300 10 9.300 H2 Q.7 9.300 .7 8Z" fill="#f6d45c" stroke="#d2921c" stroke-width="1"/><path d="M1.600 4.400 H10.400 V5.800 H1.600Z" fill="#fdf0a8"/><path d="M1.600 5.800 H10.400 V8.300 H1.600Z" fill="#fbe27a"/></svg>
<span class="t tt" style="left:390.7px;top:391.9px;font-size:9.7px;transform:scaleX(0.761);">GlobalAssemblyCache</span>
<div class="dl" style="left:368px;top:409.2px;width:7px;height:1px"></div>
<svg style="left:375.5px;top:405.13px;filter:blur(.3px)" width="12" height="10" viewBox="0 0 12 10"><path d="M.7 2.400 Q.7 1 2 1 H4.600 L5.800 2.400 H10 Q11.300 2.400 11.300 3.600 V8 Q11.300 9.300 10 9.300 H2 Q.7 9.300 .7 8Z" fill="#f6d45c" stroke="#d2921c" stroke-width="1"/><path d="M1.600 4.400 H10.400 V5.800 H1.600Z" fill="#fdf0a8"/><path d="M1.600 5.800 H10.400 V8.300 H1.600Z" fill="#fbe27a"/></svg>
<span class="t tt" style="left:390.7px;top:403.3px;font-size:9.7px;transform:scaleX(0.766);">IISRootFolder</span>
<div class="a" style="left:677px;top:88px;width:220.7px;height:17px;background:linear-gradient(to bottom,#fff,#fff 45%,#f5f6f7 50%,#f1f2f4);border-bottom:1px solid #d9dbdf"></div>
<div class="a" style="left:763.6px;top:88px;width:1px;height:16px;background:#e2e4e8"></div>
<div class="a" style="left:806px;top:88px;width:1px;height:16px;background:#e2e4e8"></div>
<div class="a" style="left:864px;top:88px;width:1px;height:16px;background:#e2e4e8"></div>
<span class="t lh" style="left:682px;top:91.0px;font-size:9.7px;transform:scaleX(0.751);">Name</span>
<span class="t lh" style="left:768px;top:91.0px;font-size:9.7px;transform:scaleX(0.772);">Size</span>
<span class="t lh" style="left:810.7px;top:91.0px;font-size:9.7px;transform:scaleX(0.793);">Date Modified</span>
<div class="a" style="left:677px;top:300.2px;width:220.7px;height:17px;background:linear-gradient(to bottom,#fff,#fff 45%,#f5f6f7 50%,#f1f2f4);border-bottom:1px solid #d9dbdf"></div>
<div class="a" style="left:705.8px;top:300.2px;width:1px;height:16px;background:#e2e4e8"></div>
<div class="a" style="left:729.3px;top:300.2px;width:1px;height:16px;background:#e2e4e8"></div>
<div class="a" style="left:753.8px;top:300.2px;width:1px;height:16px;background:#e2e4e8"></div>
<span class="t lh" style="left:682px;top:303.5px;font-size:9.7px;transform:scaleX(0.751);">Name</span>
<span class="t lh" style="left:710.7px;top:303.5px;font-size:9.7px;transform:scaleX(0.705);">Size</span>
<span class="t lh" style="left:734px;top:303.5px;font-size:9.7px;transform:scaleX(0.761);">Type</span>
<span class="t lh" style="left:759.2px;top:303.5px;font-size:9.7px;transform:scaleX(0.758);">Version</span>
<div class="a" style="left:677px;top:492.2px;width:220.7px;height:11.6px;background:#ececec"></div>
<div class="a" style="left:690px;top:492.4px;width:174px;height:10.6px;border:1px solid #9c9c9c;border-radius:2px;background:linear-gradient(to bottom,#f3f3f3,#e6e6e6 45%,#d4d4d4 55%,#c9c9c9)"></div>
<svg style="left:681px;top:494.5px" width="6" height="7" viewBox="0 0 6 7"><path d="M4.5 .8 L1 3.5 L4.5 6.2Z" fill="#3c3c3c"/></svg>
<div class="a" style="left:775.4px;top:495.6px;width:.9px;height:4.4px;background:#6f7780"></div>
<div class="a" style="left:777.0px;top:495.6px;width:.9px;height:4.4px;background:#6f7780"></div>
<div class="a" style="left:778.6px;top:495.6px;width:.9px;height:4.4px;background:#6f7780"></div>
</body></html>
